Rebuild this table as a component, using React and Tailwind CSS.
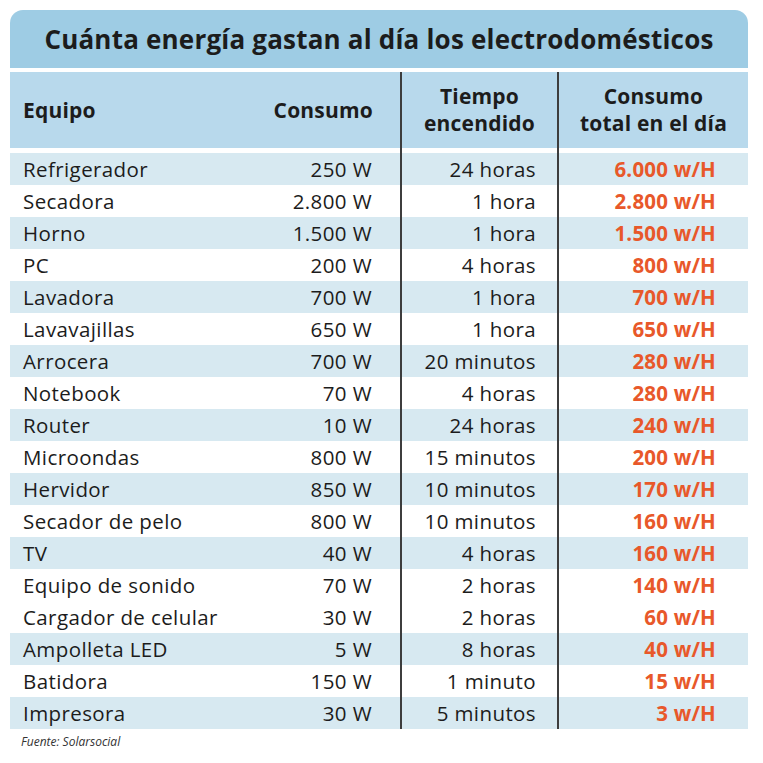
import React from 'react'

const rows = [
    ['Refrigerador', '250 W', '24 horas', '6.000 w/H', true],
    ['Secadora', '2.800 W', '1 hora', '2.800 w/H', false],
    ['Horno', '1.500 W', '1 hora', '1.500 w/H', true],
    ['PC', '200 W', '4 horas', '800 w/H', false],
    ['Lavadora', '700 W', '1 hora', '700 w/H', true],
    ['Lavavajillas', '650 W', '1 hora', '650 w/H', false],
    ['Arrocera', '700 W', '20 minutos', '280 w/H', true],
    ['Notebook', '70 W', '4 horas', '280 w/H', false],
    ['Router', '10 W', '24 horas', '240 w/H', true],
    ['Microondas', '800 W', '15 minutos', '200 w/H', false],
    ['Hervidor', '850 W', '10 minutos', '170 w/H', true],
    ['Secador de pelo', '800 W', '10 minutos', '160 w/H', false],
    ['TV', '40 W', '4 horas', '160 w/H', true],
    ['Equipo de sonido', '70 W', '2 horas', '140 w/H', false],
    ['Cargador de celular', '30 W', '2 horas', '60 w/H', false],
    ['Ampolleta LED', '5 W', '8 horas', '40 w/H', true],
    ['Batidora', '150 W', '1 minuto', '15 w/H', false],
    ['Impresora', '30 W', '5 minutos', '3 w/H', true],
]

const grid = 'grid grid-cols-[390px_157px_191px]'

const App = () => {
    return (
        <div className="w-[763px] h-[763px] bg-white pt-[10px] pl-[10px]" style={{ fontFamily: '"Open Sans", sans-serif' }}>
            <div className="w-[738px]">
                {/* titulo */}
                <div className="h-[58px] bg-[#9ecce4] rounded-t-[13px] flex items-center justify-center">
                    <h1 className="text-[26px] font-bold text-[#1c1c1c] tracking-[0.2px]">
                        Cuánta energía gastan al día los electrodomésticos
                    </h1>
                </div>

                {/* cabecera */}
                <div className={grid + ' mt-[4px] h-[76px] bg-[#b8d9ec] text-[21px] font-bold text-[#1c1c1c] leading-[27px] tracking-[0.2px]'}>
                    <div className="flex items-center justify-between pl-[13px] pr-[27px]">
                        <span>Equipo</span>
                        <span>Consumo</span>
                    </div>
                    <div className="flex items-center justify-center text-center border-l-2 border-[#3d3d3d]">
                        Tiempo<br />encendido
                    </div>
                    <div className="flex items-center justify-center text-center border-l-2 border-[#3d3d3d]">
                        Consumo<br />total en el día
                    </div>
                </div>
                <div className={grid + ' h-[5px]'}>
                    <div></div>
                    <div className="border-l-2 border-[#3d3d3d]"></div>
                    <div className="border-l-2 border-[#3d3d3d]"></div>
                </div>

                {/* filas */}
                {rows.map((r, i) => (
                    <div key={i} className={grid + ' h-[32px] text-[20.5px] text-[#1c1c1c] tracking-[0.4px] ' + (r[4] ? 'bg-[#d7e9f1]' : 'bg-white')}>
                        <div className="flex items-center justify-between pl-[13px] pr-[28px]">
                            <span>{r[0]}</span>
                            <span>{r[1]}</span>
                        </div>
                        <div className="flex items-center justify-end pr-[21px] border-l-2 border-[#3d3d3d]">
                            {r[2]}
                        </div>
                        <div className="flex items-center justify-end pr-[32px] border-l-2 border-[#3d3d3d] font-bold text-[#e8582a] tracking-[0.2px]">
                            {r[3]}
                        </div>
                    </div>
                ))}

                <p className="mt-[4px] pl-[11px] text-[12px] italic text-[#333]">Fuente: Solarsocial</p>
            </div>
        </div>
    )
}

export default App
